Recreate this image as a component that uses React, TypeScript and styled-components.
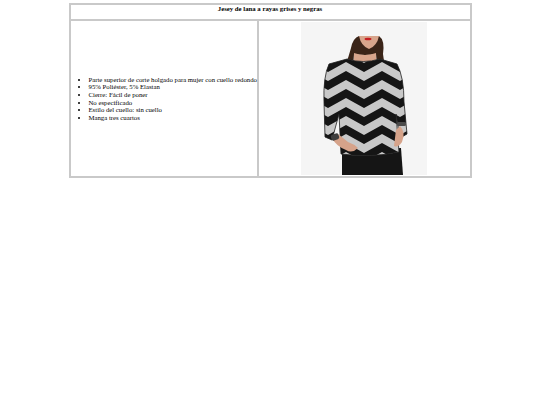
import React from 'react';
import styled, { createGlobalStyle } from 'styled-components';

const GlobalStyle = createGlobalStyle`
  body {
    margin: 3px 8px;
    background: #ffffff;
    font-family: "Liberation Serif", "Times New Roman", serif;
    color: #000000;
  }
`;

const Table = styled.table`
  width: 403px;
  margin: 0 auto;
  border: 1px solid #c9c9c9;
  border-spacing: 0;
  font-size: 6.75px;
  line-height: 8px;
`;

const Cell = styled.td`
  border: 1px solid #c9c9c9;
  padding: 1px;
  vertical-align: middle;
`;

const TitleCell = styled(Cell)`
  padding: 0 2px 6px;
  text-align: center;
  font-weight: bold;
`;

const ListCell = styled(Cell)`
  width: 184px;
`;

const PictureCell = styled(Cell)`
  text-align: center;
`;

const Features = styled.ul`
  width: 167px;
  margin: 0;
  padding-left: 17px;
  list-style: disc;
`;

const Feature = styled.li`
  white-space: nowrap;
  line-height: 7.6px;
`;

const Photo = styled.svg`
  display: block;
  margin: 0 auto;
`;

const features = [
  'Parte superior de corte holgado para mujer con cuello redondo',
  '95% Poliéster, 5% Elastan',
  'Cierre: Fácil de poner',
  'No especificado',
  'Estilo del cuello: sin cuello',
  'Manga tres cuartos',
];

function zigzag(y0: number, h: number) {
  const top: string[] = [];
  const bottom: string[] = [];
  for (let i = -4; i <= 5; i++) {
    const x = 63 + i * 18;
    const y = i % 2 === 0 ? y0 + 10 : y0;
    top.push(`${x},${y}`);
    bottom.unshift(`${x},${y + h}`);
  }
  return [...top, ...bottom].join(' ');
}

const body =
  'M46,37 Q62,42 79,37 L96,42 Q103,55 103,80 L106,112 L99,116 L95,92 L98,130 Q70,136 40,132 L38,92 L31,118 L24,115 L23,80 Q22,55 28,42 Z';

function SweaterPhoto() {
  const bands = [];
  for (let k = 0; k < 8; k++) {
    bands.push(<polygon key={k} points={zigzag(31 + k * 18, 9)} fill="#151515" />);
  }
  return (
    <Photo width="126" height="153" viewBox="0 0 126 153">
      <defs>
        <clipPath id="sweater">
          <path d={body} />
        </clipPath>
      </defs>
      <rect width="126" height="153" fill="#f5f5f5" />
      <path d="M50,26 Q52,16 58,14 L78,14 Q84,18 82,32 L84,46 L76,44 L75,32 Q64,34 53,32 L52,46 L44,44 Q48,34 50,26 Z" fill="#3a2418" />
      <path d="M58,14 L78,14 Q76,24 68,27 Q60,24 58,14 Z" fill="#d8a58c" />
      <path d="M53,31 Q64,35 75,31 L75,39 Q64,43 53,39 Z" fill="#d8a58c" />
      <ellipse cx="67" cy="17" rx="3.5" ry="1.3" fill="#c61e22" />
      <path d="M41,128 L100,126 L102,153 L41,153 Z" fill="#151515" />
      <g clipPath="url(#sweater)">
        <rect width="126" height="153" fill="#c8c8c8" />
        {bands}
      </g>
      <path d={body} fill="none" stroke="#202020" strokeWidth="0.8" />
      <path d="M31,116 Q35,124 45,128 Q51,132 57,126 Q53,122 47,120 L37,112 Z" fill="#d6a38a" />
      <rect x="30" y="112" width="8" height="6" rx="2" fill="#3e3e3e" transform="rotate(-20 34 115)" />
      <path d="M99,104 Q105,110 101,120 Q97,126 93,124 L95,108 Z" fill="#d6a38a" />
      <rect x="96" y="100" width="9" height="4" rx="1.5" fill="#4a4a4a" />
    </Photo>
  );
}

export default function App() {
  return (
    <>
      <GlobalStyle />
      <Table>
        <tbody>
          <tr>
            <TitleCell colSpan={2}>Jesey de lana a rayas grises y negras</TitleCell>
          </tr>
          <tr>
            <ListCell>
              <Features>
                {features.map((f) => (
                  <Feature key={f}>{f}</Feature>
                ))}
              </Features>
            </ListCell>
            <PictureCell>
              <SweaterPhoto />
            </PictureCell>
          </tr>
        </tbody>
      </Table>
    </>
  );
}
